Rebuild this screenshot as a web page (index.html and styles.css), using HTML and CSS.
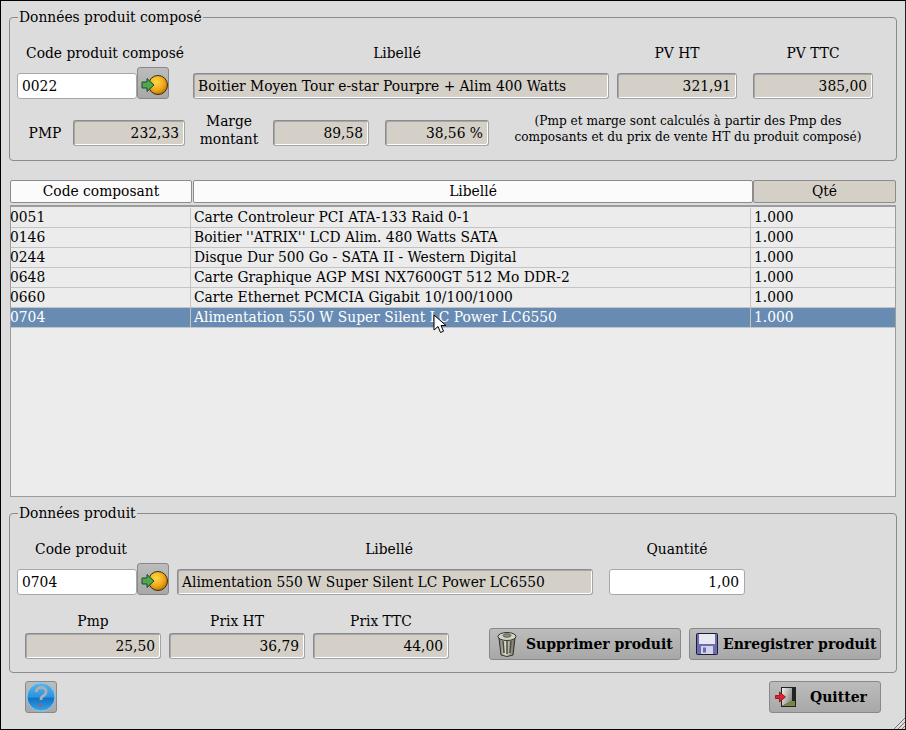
FILE: index.html
```html
<!DOCTYPE html>
<html lang="fr">
<head>
    <meta charset="UTF-8">
    <title>Produit composé</title>
    <link rel="stylesheet" href="styles.css">
</head>
<body>
<svg class="defs" width="0" height="0">
    <defs>
        <radialGradient id="coin" cx="40%" cy="35%" r="70%">
            <stop offset="0" stop-color="#ffd84a"/>
            <stop offset="0.6" stop-color="#f0a818"/>
            <stop offset="1" stop-color="#b86c08"/>
        </radialGradient>
        <linearGradient id="ball" x1="0" x2="0" y1="0" y2="1">
            <stop offset="0" stop-color="#5cb4ec"/>
            <stop offset="0.5" stop-color="#2b94dc"/>
            <stop offset="0.55" stop-color="#1272c4"/>
            <stop offset="1" stop-color="#38a4e8"/>
        </linearGradient>
        <linearGradient id="can" x1="0" x2="1" y1="0" y2="0">
            <stop offset="0" stop-color="#77776a"/>
            <stop offset="0.4" stop-color="#d8d8c8"/>
            <stop offset="1" stop-color="#6a6a5e"/>
        </linearGradient>
        <linearGradient id="doorway" x1="0" x2="1" y1="0" y2="0.6">
            <stop offset="0" stop-color="#f0f0ec"/>
            <stop offset="1" stop-color="#8c8c88"/>
        </linearGradient>
        <symbol id="go" viewBox="0 0 27 22">
            <circle cx="17" cy="12" r="9.500" fill="url(#coin)" stroke="#3c2c08" stroke-width="1"/>
            <path d="M1 9h5V5.500l7 6.500-7 6.500V15H1z" fill="#4ea850" stroke="#1c4c20" stroke-width="1"/>
        </symbol>
    </defs>
</svg>

<div class="window">
    <fieldset class="group group-top">
        <legend>Données produit composé</legend>
        <div class="row row-labels">
            <span class="lab-code">Code produit composé</span>
            <span class="lab-name">Libellé</span>
            <span class="lab-pv">PV HT</span>
            <span class="lab-pv">PV TTC</span>
        </div>
        <div class="row row-fields">
            <div class="field edit code">0022</div>
            <button class="go"><svg width="27" height="22"><use href="#go"/></svg></button>
            <div class="field name-top">Boitier Moyen Tour e-star Pourpre + Alim 400 Watts</div>
            <div class="field num pv">321,91</div>
            <div class="field num pv ttc">385,00</div>
        </div>
        <div class="row row-margin">
            <span class="lab-pmp">PMP</span>
            <div class="field num pmp">232,33</div>
            <span class="lab-marge">Marge<br>montant</span>
            <div class="field num marge">89,58</div>
            <div class="field num taux">38,56 %</div>
            <p class="note">(Pmp et marge sont calculés à partir des Pmp des<br>composants et du prix de vente HT du produit composé)</p>
        </div>
    </fieldset>

    <div class="grid">
        <div class="grid-head">
            <div class="th th-code">Code composant</div>
            <div class="th th-name">Libellé</div>
            <div class="th th-qty">Qté</div>
        </div>
        <div class="grid-body">
            <div class="tr"><span>0051</span><span>Carte Controleur PCI ATA-133 Raid 0-1</span><span>1.000</span></div>
            <div class="tr"><span>0146</span><span>Boitier ''ATRIX'' LCD Alim. 480 Watts SATA</span><span>1.000</span></div>
            <div class="tr"><span>0244</span><span>Disque Dur 500 Go - SATA II - Western Digital</span><span>1.000</span></div>
            <div class="tr"><span>0648</span><span>Carte Graphique AGP MSI NX7600GT 512 Mo DDR-2</span><span>1.000</span></div>
            <div class="tr"><span>0660</span><span>Carte Ethernet PCMCIA Gigabit 10/100/1000</span><span>1.000</span></div>
            <div class="tr selected"><span>0704</span><span>Alimentation 550 W Super Silent LC Power LC6550</span><span>1.000</span></div>
            <svg class="cursor" width="14" height="20" viewBox="0 0 14 20">
                <path d="M1 1v15l4-3.500 2.500 6 3-1.300-2.500-5.700h5z" fill="#fff" stroke="#000" stroke-width="1"/>
            </svg>
        </div>
    </div>

    <fieldset class="group group-bottom">
        <legend>Données produit</legend>
        <div class="row row-labels">
            <span class="lab-code2">Code produit</span>
            <span class="lab-name2">Libellé</span>
            <span class="lab-qty">Quantité</span>
        </div>
        <div class="row row-fields">
            <div class="field edit code">0704</div>
            <button class="go"><svg width="27" height="22"><use href="#go"/></svg></button>
            <div class="field name-bottom">Alimentation 550 W Super Silent LC Power LC6550</div>
            <div class="field edit num qty">1,00</div>
        </div>
        <div class="row row-prices">
            <div class="price"><span>Pmp</span><div class="field num">25,50</div></div>
            <div class="price"><span>Prix HT</span><div class="field num">36,79</div></div>
            <div class="price"><span>Prix TTC</span><div class="field num">44,00</div></div>
            <button class="action del">
                <svg width="22" height="28" viewBox="0 0 22 28">
                    <path d="M3 8l2 17q6 3 12 0l2-17z" fill="url(#can)" stroke="#33332c"/>
                    <path d="M7 11l1 12M11 11v13M15 11l-1 12" stroke="#4c4c42" stroke-width="1.500" fill="none"/>
                    <ellipse cx="11" cy="6.500" rx="9" ry="4" fill="#d4d4c4" stroke="#33332c"/>
                    <ellipse cx="11" cy="5.500" rx="4" ry="1.800" fill="#8c8c7c" stroke="#44443a" stroke-width="0.700"/>
                </svg>
                Supprimer produit
            </button>
            <button class="action save">
                <svg width="22" height="22" viewBox="0 0 22 22">
                    <path d="M.5 1.500q0-1 1-1h19q1 0 1 1v19q0 1-1 1h-19q-1 0-1-1z" fill="#6c6cb4" stroke="#1c1c34"/>
                    <rect x="3" y="1" width="16" height="10" fill="#e8e8f0"/>
                    <rect x="5" y="13" width="12" height="8" fill="#d4d4e8"/>
                    <rect x="7" y="14.500" width="3" height="5" fill="#6c6cb4"/>
                </svg>
                Enregistrer produit
            </button>
        </div>
    </fieldset>

    <div class="footer">
        <button class="help">
            <svg width="30" height="30" viewBox="0 0 30 30">
                <circle cx="15" cy="15" r="14" fill="url(#ball)" stroke="#8cc8ec"/>
                <path d="M10 10q1-4.500 5.500-4.500 5 .5 4.500 4.500 0 2.500-3 4-2 1-2 4" fill="none" stroke="#a4b0bc" stroke-width="2.800"/>
                <circle cx="14.500" cy="23" r="1.800" fill="#8a6a70"/>
            </svg>
        </button>
        <button class="action quit">
            <svg width="22" height="21" viewBox="0 0 22 21">
                <rect x="6" y="0" width="15" height="20" fill="#1e2420"/>
                <path d="M7 1h10v13l-10 5z" fill="url(#doorway)"/>
                <path d="M7 19l10-5h3v5z" fill="#7c8440"/>
                <path d="M.5 8.500h4V5l6 5-6 5v-3.500h-4z" fill="#e02030" stroke="#7c1018" stroke-width=".8"/>
            </svg>
            <span class="quit-label">Quitter</span>
        </button>
    </div>
    <svg class="grip" width="12" height="12" viewBox="0 0 12 12">
        <path d="M12 1L1 12M12 5l-7 7M12 9l-3 3" stroke="#777" fill="none"/>
    </svg>
</div>
</body>
</html>
```

FILE: styles.css
```css
* {
    box-sizing: border-box;
}
html, body {
    margin: 0;
    padding: 0;
}
.defs {
    display: block;
    height: 0;
}
.window {
    position: relative;
    width: 906px;
    height: 730px;
    padding: 8px 9px 0 9px;
    background: #dcdcdc;
    border: 1px solid #000;
    border-right-color: #222;
    font-family: "DejaVu Serif", serif;
    font-size: 13.83px;
    color: #000;
    overflow: hidden;
}
.group {
    margin: 0 0 0 -1px;
    width: 888px;
    padding: 0 7px;
    border: 1px solid #8c8c8c;
    border-radius: 4px;
    min-width: 0;
}
.group legend {
    padding: 0 1px;
    margin-left: 1px;
    line-height: 16px;
}
.group-top {
    height: 152px;
}
.group-bottom {
    height: 168px;
    margin-top: 8px;
}
.row {
    display: flex;
}
.row-labels {
    line-height: 18px;
    text-align: center;
}
.group-top .row-labels {
    margin-top: 19px;
}
.lab-code {
    width: 176px;
}
.lab-name {
    width: 408px;
    margin-right: 16px;
}
.lab-pv {
    width: 120px;
    margin-right: 16px;
}
.lab-code2 {
    width: 128px;
}
.lab-name2 {
    width: 416px;
    margin-left: 36px;
}
.lab-qty {
    width: 136px;
    margin-left: 12px;
}
.group-bottom .row-labels {
    margin-top: 19px;
}

.row-fields {
    margin-top: 5px;
    align-items: flex-end;
    height: 32px;
}
.field {
    height: 26px;
    line-height: 24px;
    padding: 0 4px;
    background: #d4d0c8;
    border: 1px solid #8c8c8c;
    border-right-color: #a4a4a4;
    border-bottom-color: #a4a4a4;
    border-radius: 3px;
    box-shadow: inset -1px -1px 0 #fff, inset 1px 1px 0 #a8a8a8;
    white-space: nowrap;
}
.edit {
    background: #fff;
    border: 1px solid #a8a8a8;
    box-shadow: none;
}
.num {
    text-align: right;
    padding-right: 5px;
}
.code {
    width: 120px;
}
.go {
    width: 32px;
    height: 32px;
    padding: 0;
    margin: 0;
    background: linear-gradient(#bcbcbc, #a8a8a8);
    border: 1px solid #888;
    border-radius: 3px;
}
.go svg {
    display: block;
    margin: 2px 0 0 3px;
}
.name-top {
    width: 416px;
    margin-left: 24px;
}
.pv {
    width: 120px;
    margin-left: 8px;
}
.ttc {
    margin-left: 16px;
}
.name-bottom {
    width: 416px;
    margin-left: 8px;
}
.qty {
    width: 136px;
    margin-left: 16px;
}

.row-margin {
    margin-top: 21px;
    align-items: center;
    height: 26px;
}
.lab-pmp {
    width: 56px;
    text-align: center;
}
.pmp {
    width: 112px;
}
.lab-marge {
    width: 88px;
    text-align: center;
    line-height: 18px;
    margin-bottom: 6px;
}
.marge {
    width: 96px;
}
.taux {
    width: 104px;
    margin-left: 16px;
}
.note {
    margin: 0 0 8px 0;
    width: 398px;
    text-align: center;
    font-size: 12.15px;
    line-height: 16px;
}

.grid {
    margin-top: 19px;
    width: 886px;
}
.grid-head {
    display: flex;
    height: 25px;
}
.th {
    height: 23px;
    line-height: 21px;
    text-align: center;
    background: #fbfbfb;
    border: 1px solid #8c8c8c;
    border-radius: 2px;
}
.th-code {
    width: 182px;
    margin-right: 1px;
}
.th-name {
    width: 560px;
}
.th-qty {
    width: 143px;
    background: #d4d0c8;
}
.grid-body {
    position: relative;
    height: 292px;
    padding-top: 1px;
    background: #ececec;
    border: 1px solid #9c9c9c;
    border-top: 2px solid #9c9c9c;
}
.tr {
    display: grid;
    grid-template-columns: 180px 560px 1fr;
    height: 20px;
    line-height: 19px;
    border-bottom: 1px solid #c4c4c4;
}
.tr span {
    border-right: 1px solid #c4c4c4;
    padding-left: 3px;
    white-space: nowrap;
}
.tr span:first-child {
    padding-left: 0;
    text-indent: -1px;
}
.tr span:last-child {
    border-right: 0;
}
.selected {
    background: #678bb2;
    color: #fff;
}
.cursor {
    position: absolute;
    left: 422px;
    top: 107px;
}

.row-prices {
    margin-top: 17px;
    align-items: flex-end;
}
.price {
    width: 136px;
    margin-right: 8px;
    text-align: center;
    line-height: 18px;
}
.price:first-child {
    margin-left: 8px;
}
.price .field {
    text-align: right;
    margin-top: 3px;
}
.action {
    display: flex;
    align-items: center;
    height: 32px;
    margin: 0 0 -1px 0;
    padding: 0 0 0 6px;
    background: linear-gradient(#bcbcbc, #a8a8a8);
    border: 1px solid #888;
    border-radius: 3px;
    font-family: inherit;
    font-size: 14px;
    font-weight: bold;
    color: #000;
    white-space: nowrap;
}
.del {
    width: 192px;
    margin-left: 32px;
    gap: 8px;
}
.save {
    width: 192px;
    margin-left: 8px;
    gap: 5px;
}
.footer {
    display: flex;
    justify-content: space-between;
    margin-top: 8px;
    padding: 0 15px;
}
.help {
    width: 32px;
    height: 32px;
    padding: 0;
    background: linear-gradient(#bcbcbc, #a8a8a8);
    border: 1px solid #888;
    border-radius: 3px;
}
.help svg {
    display: block;
}
.quit {
    width: 112px;
    gap: 13px;
    padding-left: 5px;
}
.grip {
    position: absolute;
    right: 0;
    bottom: 0;
}
```
